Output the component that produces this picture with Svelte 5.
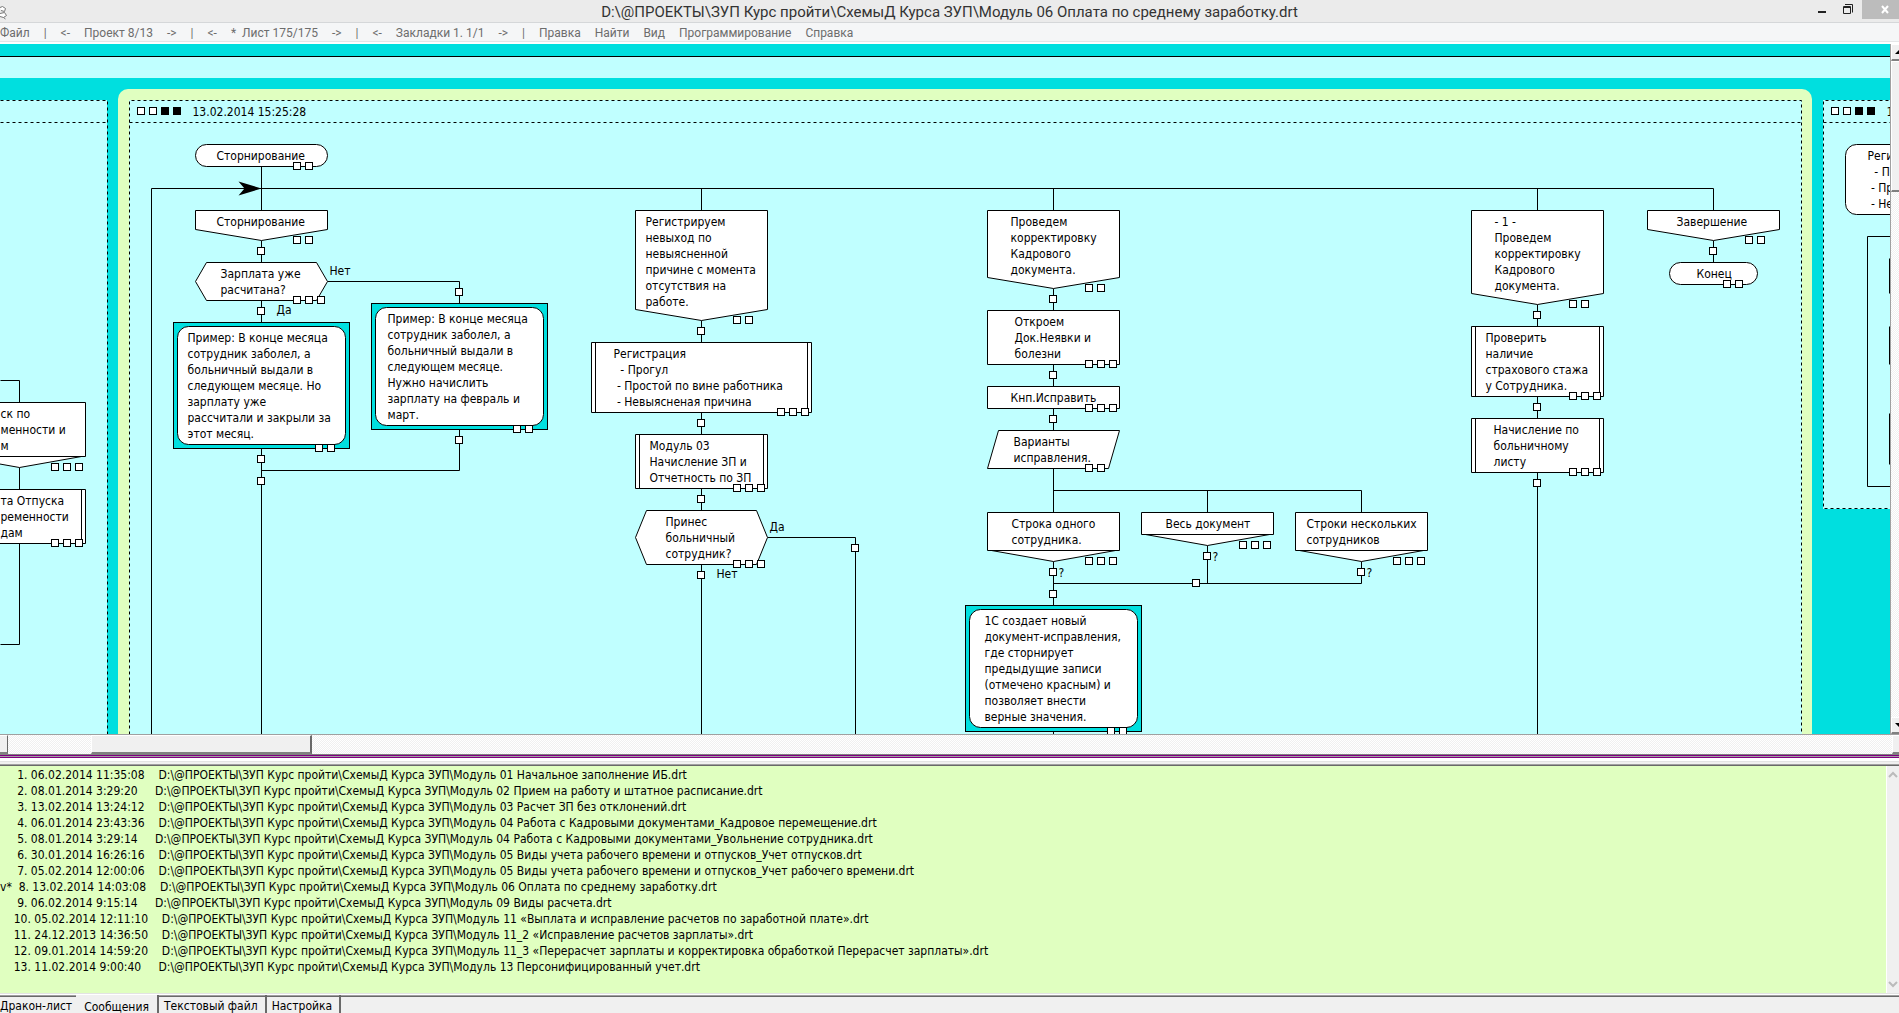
<script>
  const title = "D:\\@ПРОЕКТЫ\\ЗУП Курс пройти\\СхемыД Курса ЗУП\\Модуль 06 Оплата по среднему заработку.drt";

  const menu = [
    "Файл", "|", "<-", "Проект 8/13", "->", "|", "<-", "*  Лист 175/175", "->", "|",
    "<-", "Закладки 1. 1/1", "->", "|", "Правка", "Найти", "Вид", "Программирование", "Справка",
  ];

  // x, y: top left corner, w, h: size, tx: text indent, marks: small squares at the corner
  const nodes = [
    { kind: "round", x: 195, y: 144, w: 132, h: 22, tx: 21, marks: 2, lines: ["Сторнирование"] },
    { kind: "branch", x: 195, y: 210, w: 132, h: 30, tx: 21, marks: 2, lines: ["Сторнирование"] },
    { kind: "hex", x: 195, y: 262, w: 132, h: 38, tx: 25, marks: 3, lines: ["Зарплата уже", "расчитана?"] },
    { kind: "note", x: 173, y: 322, w: 176, h: 126, tx: 14, marks: 2, lines: ["Пример: В конце месяца", "сотрудник заболел, а", "больничный выдали в", "следующем месяце. Но", "зарплату уже", "рассчитали и закрыли за", "этот месяц."] },
    { kind: "note", x: 371, y: 303, w: 176, h: 126, tx: 16, marks: 2, lines: ["Пример: В конце месяца", "сотрудник заболел, а", "больничный выдали в", "следующем месяце.", "Нужно начислить", "зарплату на февраль и", "март."] },

    { kind: "branch", x: 635, y: 210, w: 132, h: 110, tx: 10, marks: 2, lines: ["Регистрируем", "невыход по", "невыясненной", "причине с момента", "отсутствия на", "работе."] },
    { kind: "insert", x: 591, y: 342, w: 220, h: 70, tx: 22, marks: 3, lines: ["Регистрация", "  - Прогул", " - Простой по вине работника", " - Невыясненая причина"] },
    { kind: "insert", x: 635, y: 434, w: 132, h: 54, tx: 14, marks: 3, lines: ["Модуль 03", "Начисление ЗП и", "Отчетность по ЗП"] },
    { kind: "hex", x: 635, y: 510, w: 132, h: 54, tx: 30, marks: 3, lines: ["Принес", "больничный", "сотрудник?"] },

    { kind: "branch", x: 987, y: 210, w: 132, h: 78, tx: 23, marks: 2, lines: ["Проведем", "корректировку", "Кадрового", "документа."] },
    { kind: "box", x: 987, y: 310, w: 132, h: 54, tx: 27, marks: 3, lines: ["Откроем", "Док.Неявки и", "болезни"] },
    { kind: "box", x: 987, y: 386, w: 132, h: 22, tx: 23, marks: 3, lines: ["Кнп.Исправить"] },
    { kind: "choice", x: 987, y: 430, w: 132, h: 38, tx: 26, marks: 2, lines: ["Варианты", "исправления."] },
    { kind: "variant", x: 987, y: 512, w: 132, h: 49, tx: 24, marks: 3, lines: ["Строка одного", "сотрудника."] },
    { kind: "variant", x: 1141, y: 512, w: 132, h: 33, tx: 24, marks: 3, lines: ["Весь документ"] },
    { kind: "variant", x: 1295, y: 512, w: 132, h: 49, tx: 11, marks: 3, lines: ["Строки нескольких", "сотрудников"] },
    { kind: "note", x: 965, y: 605, w: 176, h: 126, tx: 19, marks: 2, lines: ["1С создает новый", "документ-исправления,", "где сторнирует", "предыдущие записи", "(отмечено красным) и", "позволяет внести", "верные значения."] },

    { kind: "branch", x: 1471, y: 210, w: 132, h: 94, tx: 23, marks: 2, lines: ["- 1 -", "Проведем", "корректировку", "Кадрового", "документа."] },
    { kind: "insert", x: 1471, y: 326, w: 132, h: 70, tx: 14, marks: 3, lines: ["Проверить", "наличие", "страхового стажа", "у Сотрудника."] },
    { kind: "insert", x: 1471, y: 418, w: 132, h: 54, tx: 22, marks: 3, lines: ["Начисление по", "больничному", "листу"] },

    { kind: "branch", x: 1647, y: 210, w: 132, h: 30, tx: 29, marks: 2, lines: ["Завершение"] },
    { kind: "round", x: 1669, y: 262, w: 88, h: 22, tx: 27, marks: 2, lines: ["Конец"] },

    // neighbour sheets
    { kind: "variant", x: -47, y: 402, w: 132, h: 65, tx: 47, marks: 3, lines: ["ск по", "менности и", "м"] },
    { kind: "insert", x: -47, y: 489, w: 132, h: 54, tx: 47, marks: 3, lines: ["та Отпуска", "ременности", "дам"] },
    { kind: "round", x: 1845, y: 144, w: 132, h: 70, tx: 22, marks: 0, lines: ["Реги", "  - П", " - Пр", " - Не"] },
  ];

  const wires = [
    "M261 166V210 M151 734V188H1713V210 M701 188V210 M1053 188V210 M1537 188V210",
    "M261 240V262 M261 300V322 M261 448V734 M327 281H459V303 M459 429V470H261",
    "M701 320V342 M701 412V434 M701 488V510 M701 564V734 M767 537H855V734",
    "M1053 288V310 M1053 364V386 M1053 408V430 M1053 468V512 M1053 490H1361V512 M1207 490V512",
    "M1053 561V605 M1207 545V583 M1361 561V583H1053 M1053 731V734",
    "M1537 304V326 M1537 396V418 M1537 472V734 M1713 240V262",
    "M0 380H19V402 M19 467V489 M19 543V644H0",
    "M1900 236H1867V486H1900 M1889 258V293 M1889 326V364 M1889 413V464",
  ];

  // insertion points on the wires
  const points = [
    [257, 247], [257, 307], [455, 288], [257, 455], [257, 477], [455, 436],
    [697, 327], [697, 419], [697, 495], [697, 571], [851, 544],
    [1049, 295], [1049, 371], [1049, 415], [1049, 568], [1203, 552], [1357, 568],
    [1192, 579], [1049, 590], [1533, 311], [1533, 403], [1533, 479], [1709, 247],
  ];

  const labels = [
    { x: 329, y: 274, text: "Нет" },
    { x: 276, y: 313, text: "Да" },
    { x: 769, y: 530, text: "Да" },
    { x: 716, y: 577, text: "Нет" },
    { x: 1058, y: 576, text: "?" },
    { x: 1212, y: 560, text: "?" },
    { x: 1366, y: 576, text: "?" },
    { x: 192, y: 115, text: "13.02.2014 15:25:28" },
    { x: 1886, y: 115, text: "1" },
  ];

  const flags = [137, 149, 161, 173, 1831, 1843, 1855, 1867];

  const root = "D:\\@ПРОЕКТЫ\\ЗУП Курс пройти\\СхемыД Курса ЗУП\\";
  const files = [
    ["     1. 06.02.2014 11:35:08  ", "Модуль 01 Начальное заполнение ИБ.drt"],
    ["     2. 08.01.2014 3:29:20   ", "Модуль 02 Прием на работу и штатное расписание.drt"],
    ["     3. 13.02.2014 13:24:12  ", "Модуль 03 Расчет ЗП без отклонений.drt"],
    ["     4. 06.01.2014 23:43:36  ", "Модуль 04 Работа с Кадровыми документами_Кадровое перемещение.drt"],
    ["     5. 08.01.2014 3:29:14   ", "Модуль 04 Работа с Кадровыми документами_Увольнение сотрудника.drt"],
    ["     6. 30.01.2014 16:26:16  ", "Модуль 05 Виды учета рабочего времени и отпусков_Учет отпусков.drt"],
    ["     7. 05.02.2014 12:00:06  ", "Модуль 05 Виды учета рабочего времени и отпусков_Учет рабочего времени.drt"],
    ["v*  8. 13.02.2014 14:03:08  ", "Модуль 06 Оплата по среднему заработку.drt"],
    ["     9. 06.02.2014 9:15:14   ", "Модуль 09 Виды расчета.drt"],
    ["    10. 05.02.2014 12:11:10  ", "Модуль 11 «Выплата и исправление расчетов по заработной плате».drt"],
    ["    11. 24.12.2013 14:36:50  ", "Модуль 11_2 «Исправление расчетов зарплаты».drt"],
    ["    12. 09.01.2014 14:59:20  ", "Модуль 11_3 «Перерасчет зарплаты и корректировка обработкой Перерасчет зарплаты».drt"],
    ["    13. 11.02.2014 9:00:40   ", "Модуль 13 Персонифицированный учет.drt"],
  ];

  const tabs = ["Дракон-лист", "Сообщения", "Текстовый файл", "Настройка"];
  let active = "Сообщения";

  function outline(n) {
    const { x, y, w, h } = n;
    const r = x + w;
    const b = y + h;
    const c = x + w / 2;
    if (n.kind === "branch") return `M${x} ${y}H${r}V${b - 11}L${c} ${b}L${x} ${b - 11}Z`;
    if (n.kind === "variant") return `M${x} ${y}H${r}V${b - 11}H${x}Z M${x + 4} ${b - 11}L${c} ${b}L${r - 4} ${b - 11}`;
    if (n.kind === "hex") return `M${x + 11} ${y}H${r - 11}L${r} ${y + h / 2}L${r - 11} ${b}H${x + 11}L${x} ${y + h / 2}Z`;
    if (n.kind === "choice") return `M${x + 11} ${y}H${r}L${r - 11} ${b}H${x}Z`;
    if (n.kind === "insert") return `M${x} ${y}H${r}V${b}H${x}Z M${x + 4} ${y}V${b} M${r - 4} ${y}V${b}`;
    return `M${x} ${y}H${r}V${b}H${x}Z`;
  }
</script>

<div class="window">
  <header class="titlebar">
    <svg class="app-icon" width="8" height="16" viewBox="0 0 8 16">
      <path d="M0 2.500L2.500 1.500L5.500 3.500L4.500 6.500L1 5.500M0 8.500L4.500 7.500L6.500 10.500L3.500 12.500L0 11.500M3.500 12.500L5.500 14" />
    </svg>
    <h1>{title}</h1>
    <div class="controls">
      <button class="ctl" aria-label="Свернуть">
        <svg width="26" height="19"><rect x="8" y="11" width="8" height="2" fill="#222" /></svg>
      </button>
      <button class="ctl" aria-label="Восстановить">
        <svg width="26" height="19"><path d="M7.500 6.500h7v7h-7zM7 7.500h8M9 4.500h7.500v8" fill="none" stroke="#222" /></svg>
      </button>
      <button class="ctl close" aria-label="Закрыть">
        <svg width="37" height="19"><path d="M20 6l6 7M26 6l-6 7" stroke="#fff" stroke-width="2" /></svg>
      </button>
    </div>
  </header>

  <nav class="menu">
    {#each menu as item}
      {#if item === "|"}
        <span>|</span>
      {:else}
        <button>{item}</button>
      {/if}
    {/each}
  </nav>

  <div class="work">
    <svg class="sheet" role="img" aria-label="Схема">
      <rect class="teal" width="100%" height="100%" />
      <rect class="pale" y="13" width="100%" height="21" />
      <rect y="12" width="100%" height="1" />
      <!-- everything below is in window coordinates -->
      <g transform="translate(0 -44)">
        <rect class="pale" y="100" width="107" height="700" />
        <rect class="lime" x="118" y="89" width="1694" height="700" rx="10" />
        <rect class="pale" x="129" y="100" width="1673" height="700" />
        <rect class="pale" x="1823" y="100" width="300" height="409" />
        <g transform="translate(0.5 0.5)">
          <path class="dash" d="M0 100H107V734M0 122H107M129 734V100H1801V734M129 122H1801M1900 100H1823V508H1900M1823 122H1900" />
          {#each wires as d}
            <path class="wire" {d} />
          {/each}
          <path d="M261 188L238 181L244 188L238 195Z" />
          {#each nodes as n}
            {#if n.kind === "round"}
              <rect class="shape" x={n.x} y={n.y} width={n.w} height={n.h} rx="11" />
            {:else if n.kind === "note"}
              <rect class="shape frame" x={n.x} y={n.y} width={n.w} height={n.h} />
              <rect class="shape" x={n.x + 4} y={n.y + 4} width={n.w - 8} height={n.h - 8} rx="11" />
            {:else}
              <path class="shape" d={outline(n)} />
            {/if}
            {#each n.lines as line, i}
              <text x={n.x + n.tx} y={n.y + (n.kind === "note" ? 19 : 15) + i * 16}>{line}</text>
            {/each}
            {#each { length: n.marks } as _, i}
              <rect class="mark" x={n.x + n.w - 34 + i * 12} y={n.y + n.h - 4} width="7" height="7" />
            {/each}
          {/each}
          {#each points as p}
            <rect class="mark" x={p[0]} y={p[1]} width="7" height="7" />
          {/each}
          {#each flags as x, i}
            <rect class="mark" class:on={i % 4 > 1} {x} y="107" width="7" height="7" />
          {/each}
          {#each labels as l}
            <text x={l.x} y={l.y}>{l.text}</text>
          {/each}
        </g>
      </g>
    </svg>
    <div class="vscroll">
      <button class="raised arrow" aria-label="Вверх"><svg width="9" height="8"><path d="M3 6L8 1V6Z" /></svg></button>
      <div class="raised vthumb"></div>
      <button class="raised arrow last" aria-label="Вниз"><svg width="9" height="8"><path d="M3 2H9V8Z" /></svg></button>
    </div>
  </div>

  <div class="hscroll">
    <button class="raised left" aria-label="Влево"></button>
    <div class="raised hthumb"></div>
    <button class="raised right" aria-label="Вправо"></button>
  </div>
  <div class="splitter"></div>

  <div class="messages">
    <ol>
      {#each files as f}
        <li><span>{f[0]}</span>{root}{f[1]}</li>
      {/each}
    </ol>
    <div class="msgscroll">
      <svg width="12" height="8"><path d="M2 6L6 2L10 6" /></svg>
      <svg width="12" height="8"><path d="M2 2L6 6L10 2" /></svg>
    </div>
  </div>

  <div class="tabs" role="tablist">
    {#each tabs as t}
      <button role="tab" aria-selected={t === active} class:active={t === active} on:click={() => (active = t)}>{t}</button>
    {/each}
  </div>
</div>

<style>
  .window {
    height: 100vh;
    display: flex;
    flex-direction: column;
    overflow: hidden;
    background: #f0f0f0;
    font-family: "DejaVu Sans Condensed", "DejaVu Sans", sans-serif;
    font-size: 12px;
    color: #000;
  }

  button {
    margin: 0;
    padding: 0;
    border: 0;
    background: none;
    color: inherit;
    font: inherit;
    white-space: pre;
  }

  .titlebar {
    flex: none;
    display: grid;
    grid-template-columns: 90px 1fr 90px;
    height: 22px;
    border-bottom: 1px solid #d5d7d9;
    background: #ebebeb;
  }

  .app-icon {
    margin-top: 5px;
    fill: #fff;
    stroke: #777;
  }

  h1 {
    margin: 0;
    text-align: center;
    font: 15px/24px Roboto, sans-serif;
    color: #333;
    white-space: nowrap;
  }

  .controls {
    display: flex;
    justify-content: flex-end;
  }

  .ctl {
    height: 19px;
  }

  .ctl svg {
    display: block;
  }

  .close {
    background: #bcbcbc;
  }

  .menu {
    flex: none;
    display: flex;
    gap: 14px;
    height: 18px;
    border-bottom: 1px solid #e4e5e7;
    box-shadow: 0 2px #fff;
    margin-bottom: 2px;
    background: #f5f6f7;
    font: 12px/20px Roboto, sans-serif;
    color: #6d6d6d;
  }

  .work {
    flex: 1;
    min-height: 0;
    display: flex;
  }

  .sheet {
    flex: 1;
    min-width: 0;
    height: 100%;
  }

  .sheet text {
    white-space: pre;
  }

  .teal {
    fill: #00dfdf;
  }

  .pale {
    fill: #c0ffff;
  }

  .lime {
    fill: #e0ffc0;
  }

  .dash {
    fill: none;
    stroke: #000;
    stroke-dasharray: 3 3;
  }

  .wire {
    fill: none;
    stroke: #000;
  }

  .shape,
  .mark {
    fill: #fff;
    stroke: #000;
  }

  .frame {
    fill: #00dfdf;
  }

  .on {
    fill: #000;
  }

  .vscroll,
  .hscroll {
    flex: none;
    display: flex;
    background: repeating-conic-gradient(#fff 0 25%, #f0f0f0 0 50%) 0 0 / 2px 2px;
  }

  .vscroll {
    flex-direction: column;
    width: 8px;
    border-left: 1px solid #a0a0a0;
  }

  .raised {
    box-sizing: border-box;
    border: 1px solid #fff;
    border-right-color: #696969;
    border-bottom: 2px solid #808080;
    background: #f0f0f0;
  }

  .vscroll .raised {
    border-right: 0;
  }

  .arrow {
    height: 17px;
    overflow: hidden;
  }

  .last {
    margin-top: auto;
  }

  .vthumb {
    height: 131px;
  }

  .hscroll {
    height: 19px;
    border-top: 1px solid #a0a0a0;
  }

  .left {
    width: 8px;
    border-left: 0;
  }

  .hthumb {
    width: 221px;
    margin-left: 83px;
    border-right-width: 2px;
  }

  .right {
    width: 7px;
    margin-left: auto;
    border-right: 0;
  }

  .splitter {
    flex: none;
    height: 12px;
    background: linear-gradient(#808080 1px, #800080 1px 2px, #a0a0a0 2px 3px, #800080 3px 4px, #fff 4px 7px, #e3e3e3 7px 8px, #f0f0f0 8px 10px, #a0a0a0 10px 11px, #696969 11px);
  }

  .messages {
    flex: none;
    display: flex;
    height: 227px;
    border-bottom: 1px solid #e3e3e3;
    background: #e0ffc0;
  }

  ol {
    flex: 1;
    margin: 0;
    padding: 1px 0;
    list-style: none;
    line-height: 16px;
    white-space: pre;
  }

  li span {
    margin-right: 7px;
  }

  .msgscroll {
    display: flex;
    flex-direction: column;
    justify-content: space-between;
    box-sizing: border-box;
    width: 13px;
    padding: 5px 0;
    border-left: 1px solid #fff;
    background: #f0f0f0;
    fill: none;
    stroke: #bbb;
    stroke-width: 2;
  }

  .tabs {
    flex: none;
    display: flex;
    height: 18px;
    border-top: 1px solid #fff;
    overflow: hidden;
    box-shadow: inset 0 1px #a0a0a0, inset 0 2px #696969;
  }

  .tabs button {
    height: 18px;
    padding: 4px 7px 0 5px;
    border-right: 2px solid #696969;
    line-height: 14px;
  }

  .tabs button:first-child {
    padding: 4px 4px 0 0;
    border-right: 0;
  }

  .tabs .active {
    padding: 6px 8px 0;
    line-height: 12px;
    background: #f0f0f0;
  }
</style>
